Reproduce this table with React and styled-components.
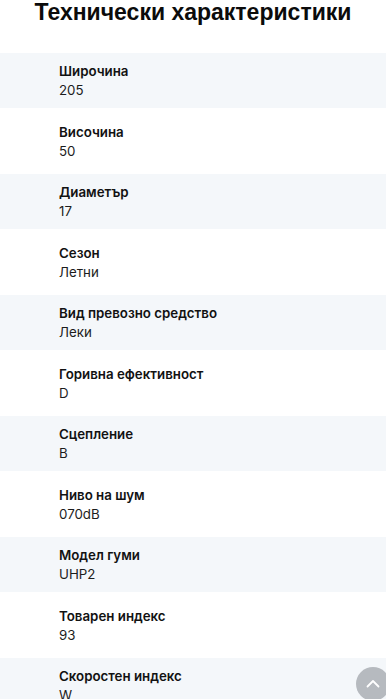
import React from "react";
import styled, { createGlobalStyle } from "styled-components";

const GlobalStyle = createGlobalStyle`
  html, body {
    margin: 0;
    padding: 0;
    background: #ffffff;
  }
  body {
    font-family: Inter, "Noto Sans", sans-serif;
    color: #141414;
    overflow: hidden;
  }
`;

const specs = [
  { label: "Широчина", value: "205" },
  { label: "Височина", value: "50" },
  { label: "Диаметър", value: "17" },
  { label: "Сезон", value: "Летни" },
  { label: "Вид превозно средство", value: "Леки" },
  { label: "Горивна ефективност", value: "D" },
  { label: "Сцепление", value: "B" },
  { label: "Ниво на шум", value: "070dB" },
  { label: "Модел гуми", value: "UHP2" },
  { label: "Товарен индекс", value: "93" },
  { label: "Скоростен индекс", value: "W" },
];

const App = () => {
  return (
    <Wrapper>
      <GlobalStyle />
      <Title>Технически характеристики</Title>
      <SpecList>
        {specs.map((item, index) => (
          <SpecRow key={index} $shaded={index % 2 === 0}>
            <Label>{item.label}</Label>
            <Value>{item.value}</Value>
          </SpecRow>
        ))}
      </SpecList>
      <ScrollTop aria-label="Нагоре">
        <svg width="14" height="9" viewBox="0 0 14 9" fill="none">
          <path
            d="M1.5 7.5L7 2l5.5 5.5"
            stroke="#ffffff"
            strokeWidth="1.8"
            strokeLinecap="round"
            strokeLinejoin="round"
          />
        </svg>
      </ScrollTop>
    </Wrapper>
  );
};

const Wrapper = styled.main`
  display: flex;
  flex-direction: column;
  width: 386px;
  height: 699px;
  overflow: hidden;
`;

const Title = styled.h2`
  margin: 0 0 29px 0;
  font-family: "Liberation Sans", Arial, sans-serif;
  font-weight: 700;
  font-size: 23px;
  line-height: 24px;
  text-align: center;
  color: #0b0b0b;
`;

const SpecList = styled.div`
  display: flex;
  flex-direction: column;
  gap: 5.5px;
`;

const SpecRow = styled.div`
  display: flex;
  flex-direction: column;
  flex-shrink: 0;
  height: 55px;
  box-sizing: border-box;
  padding: 9px 0 0 59px;
  background: ${({ $shaded }) => ($shaded ? "#f4f7fa" : "transparent")};
`;

const Label = styled.span`
  font-weight: 600;
  font-size: 13.3px;
  line-height: 19px;
  color: #121212;
`;

const Value = styled.span`
  font-weight: 400;
  font-size: 13.3px;
  line-height: 19px;
  color: #1c1c1c;
`;

const ScrollTop = styled.button`
  position: fixed;
  left: 356px;
  top: 667px;
  width: 34px;
  height: 34px;
  padding: 0;
  border: none;
  border-radius: 50%;
  background: #b6babf;
  display: flex;
  align-items: center;
  justify-content: center;
  cursor: pointer;

  svg {
    margin-top: -2px;
  }
`;

export default App;
